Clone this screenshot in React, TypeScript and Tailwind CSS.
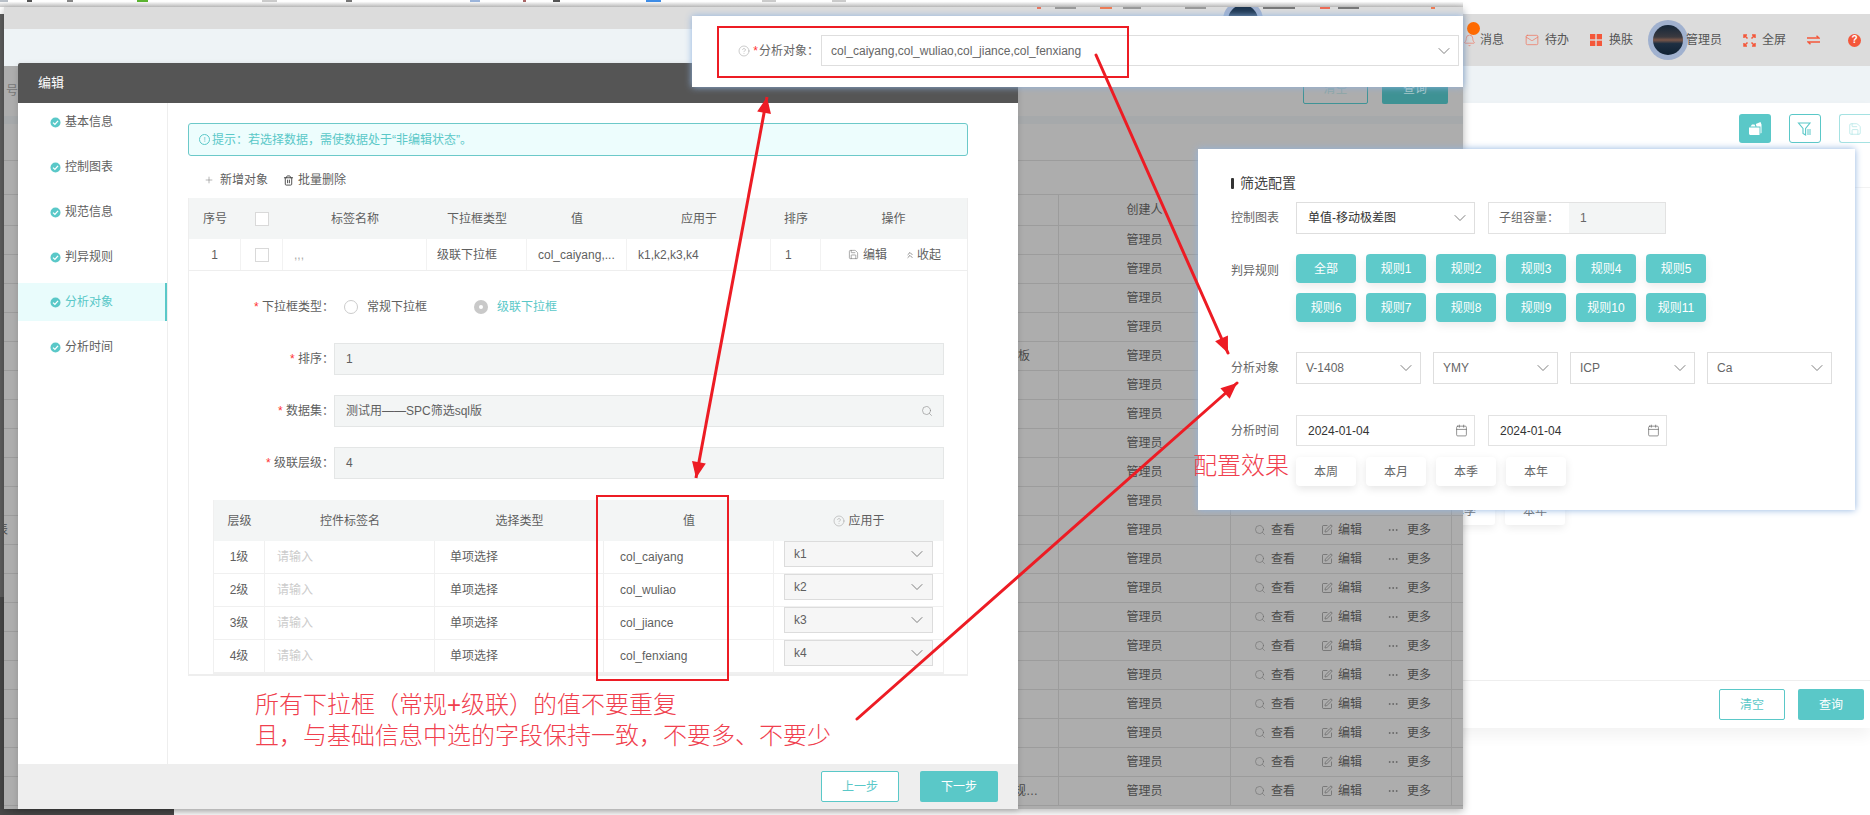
import React from "react";
import { Bell, Calendar, ChevronDown, ChevronsUp, CircleHelp, Ellipsis, Mail, Plus, Save, Search, SquarePen, Trash2 } from "lucide-react";

const RED = "#ed1c24";

const Chevron = () => <ChevronDown size={20} strokeWidth={1} className="-mx-[2px] text-[#666]" />;

const CheckDot = () => (
    <svg width="11" height="11" viewBox="0 0 11 11">
        <circle cx="5.5" cy="5.5" r="5" fill="#5ac8c8" />
        <path d="M3 5.6 L4.9 7.4 L8 3.9" fill="none" stroke="#fff" strokeWidth="1.3" />
    </svg>
);

const SelectBox = ({ text, className, dark }: { text: string; className: string; dark?: boolean }) => (
    <div className={`flex items-center justify-between border border-[#dedede] bg-white pr-[6px] text-[12px] ${dark ? "text-[#333]" : "text-[#666]"} ${className}`}>
        <span>{text}</span>
        <Chevron />
    </div>
);

const DateBox = ({ text }: { text: string }) => (
    <div className="flex h-[31px] w-[179px] items-center justify-between border border-[#e2e2e2] pl-[11px] pr-[6px] text-[12px] text-[#333]">
        <span>{text}</span>
        <Calendar size={13} strokeWidth={1.3} className="text-[#666]" />
    </div>
);

const FormRow = ({ label, value, icon }: { label: string; value: string; icon?: boolean }) => (
    <div className="mt-[20px] flex items-center">
        <div className="w-[144px] text-right text-[12px]">
            <span className="text-[#f33]">*</span> {label}：
        </div>
        <div className="flex h-[32px] w-[610px] items-center justify-between border border-[#e4e6e6] bg-[#f3f5f5] pl-[11px] pr-[10px] text-[12px]">
            <span>{value}</span>
            {icon && <Search size={12} strokeWidth={1.2} className="text-[#888]" />}
        </div>
    </div>
);

const navItems = ["基本信息", "控制图表", "规范信息", "判异规则", "分析对象", "分析时间"];
const levels = [
    { level: "1级", value: "col_caiyang", key: "k1" },
    { level: "2级", value: "col_wuliao", key: "k2" },
    { level: "3级", value: "col_jiance", key: "k3" },
    { level: "4级", value: "col_fenxiang", key: "k4" },
];
const rulesA = ["全部", "规则1", "规则2", "规则3", "规则4", "规则5"];
const rulesB = ["规则6", "规则7", "规则8", "规则9", "规则10", "规则11"];

const topBits = [
    [0, 8, "#b9c0c8"], [27, 5, "#555"], [67, 6, "#888"], [137, 11, "#5cb531"], [262, 15, "#ccc"], [346, 6, "#777"],
    [470, 10, "#9db6dc"], [523, 3, "#a66"], [553, 7, "#555"], [646, 15, "#3f8ee8"], [762, 14, "#ccc"], [832, 14, "#ccc"],
] as const;

const dimBits = [
    [1037, 4, "#e8755f"], [1055, 21, "#999"], [1100, 12, "#ee7b55"], [1123, 18, "#999"], [1185, 21, "#999"],
    [1263, 32, "#777"], [1320, 10, "#ee6b55"], [1338, 21, "#777"], [1386, 3, "#ddd"], [1431, 4, "#ee7b55"],
] as const;

// rows of the table behind the modal; "far" is text of the column hidden by the modal, "edge" the cut glyph at the left
const rowsBehind: { far?: string; farPad?: string; edge?: string }[] = Array.from({ length: 20 }, () => ({}));
rowsBehind[4] = { far: "板", farPad: "pr-[28px]" };
rowsBehind[19] = { far: "规…", farPad: "pr-[20px]" };
rowsBehind[10] = { edge: "表" };

const Head = ({ x1, y1, x2, y2, len = 16, w = 7 }: { x1: number; y1: number; x2: number; y2: number; len?: number; w?: number }) => {
    const d = Math.hypot(x2 - x1, y2 - y1);
    const ux = (x2 - x1) / d;
    const uy = (y2 - y1) / d;
    const bx = x2 - ux * len;
    const by = y2 - uy * len;
    return <polygon points={`${x2},${y2} ${bx - uy * w},${by + ux * w} ${bx + uy * w},${by - ux * w}`} fill={RED} />;
};

const App = () => {
    return (
        <div className="relative h-[815px] w-[1870px] overflow-hidden bg-white text-[12px] [font-family:'Liberation_Sans','Noto_Sans_CJK_SC',sans-serif]">
            {/* App in the back, only its right side shows */}
            <div className="flex h-[14px] items-start">
                {topBits.map(([x, w, c], i) => (
                    <span key={i} className="absolute top-0 h-[2px]" style={{ left: x, width: w, background: c }} />
                ))}
            </div>
            <header className="flex h-[52px] items-center bg-[#dcdcdc] pl-[1462px] text-[12px] text-[#555]">
                <div className="relative ml-[1px] flex items-center">
                    <Bell size={13} strokeWidth={1.2} className="text-[#f0715a]" />
                    <span className="absolute left-[4px] top-[-9px] h-[13px] w-[13px] rounded-full bg-[#ff6a00]" />
                    <span className="ml-[4px]">消息</span>
                </div>
                <Mail size={14} strokeWidth={1.2} className="ml-[21px] text-[#f0715a]" />
                <span className="ml-[6px]">待办</span>
                <svg width="12" height="12" viewBox="0 0 12 12" className="ml-[21px]" fill="#f4573a">
                    <rect width="5.3" height="5.3" />
                    <rect x="6.7" width="5.3" height="5.3" />
                    <rect y="6.7" width="5.3" height="5.3" />
                    <rect x="6.7" y="6.7" width="5.3" height="5.3" />
                </svg>
                <span className="ml-[7px]">换肤</span>
                <div className="ml-[15px] flex h-[40px] w-[40px] items-center justify-center rounded-full bg-[#a0b1cf]">
                    <div className="h-[30px] w-[30px] rounded-full bg-[linear-gradient(#13263a_0%,#3b3a40_40%,#7a5648_50%,#1e2f42_62%,#0f2133_100%)]" />
                </div>
                <span className="ml-[-2px]">管理员</span>
                <svg width="13" height="13" viewBox="0 0 13 13" className="ml-[21px]" fill="none" stroke="#f4573a" strokeWidth="1.5">
                    <path d="M1 4V1H4M9 1H12V4M12 9V12H9M4 12H1V9M1.5 1.5L4.5 4.5M11.5 1.5L8.5 4.5M11.5 11.5L8.5 8.5M1.5 11.5L4.5 8.5" />
                </svg>
                <span className="ml-[6px]">全屏</span>
                <svg width="13" height="10" viewBox="0 0 13 10" className="ml-[21px]" fill="none" stroke="#f4573a" strokeWidth="1.5">
                    <path d="M0 3H12L9.5 0.8M13 7H1L3.5 9.2" />
                </svg>
                <div className="ml-[28px] flex h-[13px] w-[13px] items-center justify-center rounded-full bg-[#f4573a] text-[10px] font-bold leading-none text-white">?</div>
            </header>
            <div className="h-[37px] bg-[#eef3f6]" />
            <section className="flex h-[625px] flex-col shadow-[0_8px_14px_rgba(0,0,0,0.05)]">
                <div className="flex h-[85px] justify-end gap-[18px] border-b border-[#f2f2f2] pt-[11px]">
                    <div className="flex h-[29px] w-[32px] items-center justify-center rounded-[3px] bg-[#5ac8c8]">
                        <svg width="15" height="15" viewBox="0 0 15 15" fill="#fff">
                            <path d="M1 6.5H11.5V14H2.5C1.6 14 1 13.4 1 12.5Z" />
                            <path d="M2.5 5.5L4 3.5H6.5L7.5 5.5Z" />
                            <path d="M8.5 5.5L7.8 3L12.5 1L13.5 3.5V12L12.5 12.6V5.5Z" />
                        </svg>
                    </div>
                    <div className="flex h-[29px] w-[32px] items-center justify-center rounded-[3px] border border-[#5ac8c8]">
                        <svg width="16" height="16" viewBox="0 0 16 16" fill="none" stroke="#5ac8c8" strokeWidth="1.1">
                            <path d="M1.5 2H13L8.6 7.5V14L6 12.5V7.5Z" />
                            <path d="M10 9H14M10 11H14M10 13H14" />
                        </svg>
                    </div>
                    <div className="flex h-[29px] w-[31px] items-center justify-center rounded-l-[3px] border border-r-0 border-[#a5e2e2]">
                        <Save size={14} strokeWidth={1.1} className="text-[#a5e2e2]" />
                    </div>
                </div>
                <div className="flex flex-1 gap-[10px] pl-[1433px] pt-[308px]">
                    <div className="flex h-[29px] w-[62px] items-center justify-center rounded-[3px] text-[#666] shadow-[0_3px_8px_rgba(0,0,0,0.08)]">本季</div>
                    <div className="flex h-[29px] w-[60px] items-center justify-center rounded-[3px] text-[#666] shadow-[0_3px_8px_rgba(0,0,0,0.08)]">本年</div>
                </div>
                <div className="flex h-[48px] items-center justify-end gap-[13px] border-t border-[#eee] pr-[6px]">
                    <button className="h-[31px] w-[66px] rounded-[2px] border border-[#5ac8c8] text-[12px] text-[#5ac8c8]">清空</button>
                    <button className="h-[31px] w-[66px] rounded-[2px] bg-[#5ac8c8] text-[12px] text-white">查询</button>
                </div>
            </section>

            {/* Dark edge of the desktop */}
            <div className="absolute left-0 top-[14px] h-[583px] w-[4px] bg-[#5e5e5e]" />
            <div className="absolute bottom-0 left-0 top-[597px] w-[4px] bg-[#484848]" />
            <div className="absolute bottom-0 left-0 h-[6px] w-[174px] bg-[#4a4a4a]" />
            <div className="absolute left-0 right-[407px] top-[2px] h-[5px] bg-[linear-gradient(#fafafa,#c9c9c9)]" />

            {/* Screenshot window under the mask */}
            <div className="absolute left-[4px] top-[7px] flex h-[802px] w-[1459px] flex-col overflow-hidden shadow-[0_2px_8px_rgba(0,0,0,0.3)]">
                <div className="h-[22px] bg-[#dcdcdc]" />
                <div className="h-[37px] bg-[#eef3f6]" />
                <div className="flex flex-1 flex-col bg-[#adadad] text-[#4a4a4a]">
                    <div className="relative flex h-[50px] items-end justify-end gap-[14px] pb-[12px] pr-[15px]">
                        <span className="absolute left-[2px] top-[16px] text-[12px] text-[#777]">号</span>
                        <div className="flex h-[31px] w-[65px] items-center justify-center rounded-[2px] border border-[#3f9396] text-[#8ba5a5]">清空</div>
                        <div className="flex h-[31px] w-[66px] items-center justify-center rounded-[2px] bg-[#3e9294] text-[#a9c9c9]">查询</div>
                    </div>
                    <div className="h-[8px] bg-[#a6a9ab]" />
                    <div className="h-[37px] border-b border-[#9c9c9c]" />
                    <div className="h-[34px] border-b border-[#9c9c9c]" />
                    <div className="grid h-[31px] grid-cols-[1054px_172px_222px] border-b border-[#9c9c9c]">
                        <div />
                        <div className="flex items-center justify-center border-l border-[#9c9c9c] text-[12px]">创建人</div>
                        <div className="border-l border-r border-[#9c9c9c]" />
                    </div>
                    {rowsBehind.map((row, i) => (
                        <div key={i} className="grid h-[29px] grid-cols-[1054px_172px_222px] border-b border-[#9c9c9c]">
                            <div className={`flex items-center justify-end ${row.farPad ?? ""}`}>
                                {row.edge && <span className="mr-auto ml-[-8px]">{row.edge}</span>}
                                {row.far}
                            </div>
                            <div className="flex items-center justify-center border-l border-[#9c9c9c]">管理员</div>
                            <div className="flex items-center border-l border-r border-[#9c9c9c] pl-[23px]">
                                <Search size={12} strokeWidth={1.1} className="text-[#666]" />
                                <span className="ml-[5px]">查看</span>
                                <SquarePen size={12} strokeWidth={1.2} className="ml-[26px] text-[#555]" />
                                <span className="ml-[5px]">编辑</span>
                                <Ellipsis size={12} strokeWidth={1.3} className="ml-[25px] text-[#555]" />
                                <span className="ml-[8px]">更多</span>
                            </div>
                        </div>
                    ))}
                </div>
                <div className="absolute left-[1219px] top-[-7px] h-[40px] w-[40px] rounded-full bg-[#a0b1cf] p-[5px]">
                    <div className="h-full w-full rounded-full bg-[#1c3550]" />
                </div>
                {dimBits.map(([x, w, c], i) => (
                    <span key={i} className="absolute top-[0px] h-[2px]" style={{ left: x - 4, width: w, background: c }} />
                ))}
            </div>

            {/* Edit modal */}
            <div className="absolute left-[18px] top-[63px] flex h-[746px] w-[1000px] flex-col bg-white text-[#5f5f5f] shadow-[0_2px_6px_rgba(0,0,0,0.15)]">
                <div className="flex h-[40px] items-center rounded-t-[2px] bg-[#555] pl-[20px] text-[13px] text-white">编辑</div>
                <div className="flex flex-1">
                    <nav className="w-[150px] border-r border-[#eee]">
                        {navItems.map((item) => (
                            <div
                                key={item}
                                className={`mb-[7px] flex h-[38px] items-center gap-[4px] pl-[32px] ${item === "分析对象" ? "border-r-2 border-[#5ac8c8] bg-[#e9fcfc] text-[#5ac8c8]" : ""}`}
                            >
                                <CheckDot />
                                <span>{item}</span>
                            </div>
                        ))}
                    </nav>
                    <main className="flex-1 pl-[20px] pr-[50px] pt-[20px]">
                        <div className="flex h-[33px] items-center gap-[2px] rounded-[3px] border border-[#6cc9c9] bg-[#edfdfd] pl-[10px] text-[#5ac8c8]">
                            <span className="flex h-[11px] w-[11px] items-center justify-center rounded-full border border-[#5ac8c8] text-[8px] leading-none">!</span>
                            <span>提示：若选择数据，需使数据处于“非编辑状态”。</span>
                        </div>
                        <div className="flex h-[42px] items-center pl-[16px] pt-[6px]">
                            <Plus size={10} strokeWidth={1.3} className="text-[#777]" />
                            <span className="ml-[6px]">新增对象</span>
                            <Trash2 size={11} strokeWidth={2} className="ml-[15px] text-[#444]" />
                            <span className="ml-[4px]">批量删除</span>
                        </div>
                        <div className="h-[478px] border border-b-2 border-t-0 border-[#eee]">
                            <div className="grid h-[41px] grid-cols-[52px_42px_144px_100px_100px_144px_50px_145px] items-center bg-[#f3f5f5] text-center">
                                <span>序号</span>
                                <span className="mx-auto h-[14px] w-[14px] border border-[#d9d9d9] bg-white" />
                                <span>标签名称</span>
                                <span>下拉框类型</span>
                                <span>值</span>
                                <span>应用于</span>
                                <span>排序</span>
                                <span>操作</span>
                            </div>
                            <div className="grid h-[32px] grid-cols-[52px_42px_144px_100px_100px_144px_50px_145px] border-b border-[#eee]">
                                <div className="flex items-center justify-center border-r border-[#f2f2f2]">1</div>
                                <div className="flex items-center justify-center border-r border-[#f2f2f2]">
                                    <span className="h-[14px] w-[14px] border border-[#d9d9d9]" />
                                </div>
                                <div className="flex items-center border-r border-[#f2f2f2] pl-[11px] text-[#aaa]">,,,</div>
                                <div className="flex items-center border-r border-[#f2f2f2] pl-[10px]">级联下拉框</div>
                                <div className="flex items-center border-r border-[#f2f2f2] pl-[11px]">col_caiyang,...</div>
                                <div className="flex items-center border-r border-[#f2f2f2] pl-[11px]">k1,k2,k3,k4</div>
                                <div className="flex items-center border-r border-[#f2f2f2] pl-[14px]">1</div>
                                <div className="flex items-center pl-[27px]">
                                    <Save size={11} strokeWidth={1.2} className="text-[#666]" />
                                    <span className="ml-[4px]">编辑</span>
                                    <ChevronsUp size={10} strokeWidth={1.6} className="ml-[18px] text-[#555]" />
                                    <span className="ml-[2px]">收起</span>
                                </div>
                            </div>
                            <div className="pl-[1px]">
                                <div className="mt-[20px] flex h-[32px] items-center">
                                    <div className="w-[144px] text-right">
                                        <span className="text-[#f33]">*</span> 下拉框类型：
                                    </div>
                                    <span className="ml-[10px] h-[14px] w-[14px] rounded-full border border-[#ccc]" />
                                    <span className="ml-[9px]">常规下拉框</span>
                                    <span className="ml-[47px] flex h-[14px] w-[14px] items-center justify-center rounded-full bg-[#c9c9c9]">
                                        <span className="h-[4px] w-[4px] rounded-full bg-white" />
                                    </span>
                                    <span className="ml-[9px] text-[#5ac8c8]">级联下拉框</span>
                                </div>
                                <FormRow label="排序" value="1" />
                                <FormRow label="数据集" value="测试用——SPC筛选sql版" icon />
                                <FormRow label="级联层级" value="4" />
                                <div className="ml-[23px] mt-[21px] w-[731px] border border-t-0 border-[#f0f0f0]">
                                    <div className="grid h-[41px] grid-cols-[51px_170px_169px_170px_170px] items-center bg-[#f3f5f5] text-center">
                                        <span>层级</span>
                                        <span>控件标签名</span>
                                        <span>选择类型</span>
                                        <span>值</span>
                                        <span className="flex items-center justify-center gap-[3px]">
                                            <CircleHelp size={12} strokeWidth={1} className="text-[#999]" />
                                            应用于
                                        </span>
                                    </div>
                                    {levels.map((row) => (
                                        <div key={row.key} className="grid h-[33px] grid-cols-[51px_170px_169px_170px_170px] border-b border-[#f0f0f0]">
                                            <div className="flex items-center justify-center border-r border-[#f0f0f0]">{row.level}</div>
                                            <div className="flex items-center border-r border-[#f0f0f0] pl-[12px] text-[#ccc]">请输入</div>
                                            <div className="flex items-center border-r border-[#f0f0f0] pl-[15px]">单项选择</div>
                                            <div className="flex items-center border-r border-[#f0f0f0] pl-[16px]">{row.value}</div>
                                            <div className="pl-[10px]">
                                                <div className="flex h-[26px] w-[149px] items-center justify-between border border-[#dcdcdc] bg-[#f6f6f6] pl-[9px] pr-[7px]">
                                                    <span>{row.key}</span>
                                                    <Chevron />
                                                </div>
                                            </div>
                                        </div>
                                    ))}
                                </div>
                            </div>
                        </div>
                    </main>
                </div>
                <footer className="flex h-[45px] items-center justify-end gap-[21px] bg-[#eee] pr-[20px]">
                    <button className="h-[31px] w-[78px] rounded-[2px] border border-[#5ac8c8] bg-white text-[12px] text-[#5ac8c8]">上一步</button>
                    <button className="h-[31px] w-[78px] rounded-[2px] bg-[#5ac8c8] text-[12px] text-white">下一步</button>
                </footer>
            </div>

            {/* Cut-out of the object select */}
            <div className="absolute left-[692px] top-[16px] flex h-[71px] w-[771px] items-center bg-white pb-[2px] shadow-[0_0_7px_#8fb3e0]">
                <div className="flex w-[127px] items-center justify-end text-[#666]">
                    <CircleHelp size={12} strokeWidth={1} className="mr-[3px] text-[#999]" />
                    <span className="text-[#f33]">*</span>
                    <span className="ml-[1px]">分析对象：</span>
                </div>
                <SelectBox text="col_caiyang,col_wuliao,col_jiance,col_fenxiang" className="ml-[2px] h-[31px] w-[638px] pl-[9px]" />
            </div>

            {/* Cut-out of the filter result */}
            <div className="absolute left-[1198px] top-[149px] h-[361px] w-[657px] bg-white pl-[33px] pt-[24px] text-[#666] shadow-[0_0_7px_#8fb3e0]">
                <div className="flex h-[20px] items-center text-[14px] text-[#444]">
                    <span className="mr-[6px] h-[11px] w-[3px] rounded-[1px] bg-[#333]" />
                    筛选配置
                </div>
                <div className="mt-[9px] flex items-center">
                    <span className="w-[65px]">控制图表</span>
                    <SelectBox text="单值-移动极差图" dark className="h-[32px] w-[179px] pl-[11px]" />
                    <div className="ml-[13px] flex h-[32px] w-[178px] border border-[#e2e2e2]">
                        <span className="flex w-[80px] items-center pl-[10px]">子组容量：</span>
                        <span className="flex flex-1 items-center bg-[#f3f5f5] pl-[11px]">1</span>
                    </div>
                </div>
                <div className="mt-[20px] flex">
                    <span className="w-[65px] pt-[8px]">判异规则</span>
                    <div className="grid grid-cols-[repeat(6,60px)] gap-x-[10px] gap-y-[10px]">
                        {[...rulesA, ...rulesB].map((rule) => (
                            <div key={rule} className="flex h-[29px] items-center justify-center rounded-[4px] bg-[#5ecaca] text-white shadow-[0_4px_8px_rgba(0,0,0,0.08)]">
                                {rule}
                            </div>
                        ))}
                    </div>
                </div>
                <div className="mt-[30px] flex items-center">
                    <span className="w-[65px]">分析对象</span>
                    <div className="flex gap-[12px]">
                        <SelectBox text="V-1408" className="h-[32px] w-[125px] pl-[9px]" />
                        <SelectBox text="YMY" className="h-[32px] w-[125px] pl-[9px]" />
                        <SelectBox text="ICP" className="h-[32px] w-[125px] pl-[9px]" />
                        <SelectBox text="Ca" className="h-[32px] w-[125px] pl-[9px]" />
                    </div>
                </div>
                <div className="mt-[31px] flex items-center">
                    <span className="w-[65px]">分析时间</span>
                    <div className="flex gap-[13px]">
                        <DateBox text="2024-01-04" />
                        <DateBox text="2024-01-04" />
                    </div>
                </div>
                <div className="ml-[65px] mt-[11px] flex gap-[10px]">
                    {["本周", "本月", "本季", "本年"].map((label) => (
                        <div key={label} className="flex h-[29px] w-[60px] items-center justify-center rounded-[4px] bg-white shadow-[0_3px_8px_rgba(0,0,0,0.1)]">
                            {label}
                        </div>
                    ))}
                </div>
            </div>

            {/* Red notes drawn over the screenshots */}
            <div className="absolute left-[717px] top-[26px] h-[52px] w-[412px] border-2 border-[#ed1c24]" />
            <div className="absolute left-[596px] top-[495px] h-[186px] w-[133px] border-2 border-[#ed1c24]" />
            <svg className="absolute left-0 top-0" width="1870" height="815" fill="none">
                <line x1="767" y1="97" x2="696" y2="478" stroke={RED} strokeWidth="3" />
                <Head x1={696} y1={478} x2={767} y2={97} />
                <Head x1={767} y1={97} x2={696} y2={478} />
                <line x1="1096" y1="55" x2="1228" y2="353" stroke={RED} strokeWidth="3" strokeLinecap="round" />
                <Head x1={1096} y1={55} x2={1228} y2={353} />
                <line x1="857" y1="719" x2="1237" y2="383" stroke={RED} strokeWidth="3" strokeLinecap="round" />
                <Head x1={857} y1={719} x2={1237} y2={383} />
            </svg>
            <div className="absolute left-[255px] top-[689px] text-[24px] font-light leading-[31px] text-[#f0404e]">
                <div>所有下拉框（常规+级联）的值不要重复</div>
                <div>且，与基础信息中选的字段保持一致，不要多、不要少</div>
            </div>
            <div className="absolute left-[1193px] top-[450px] text-[24px] font-light leading-[31px] text-[#f0404e]">配置效果</div>
        </div>
    );
};

export default App;
